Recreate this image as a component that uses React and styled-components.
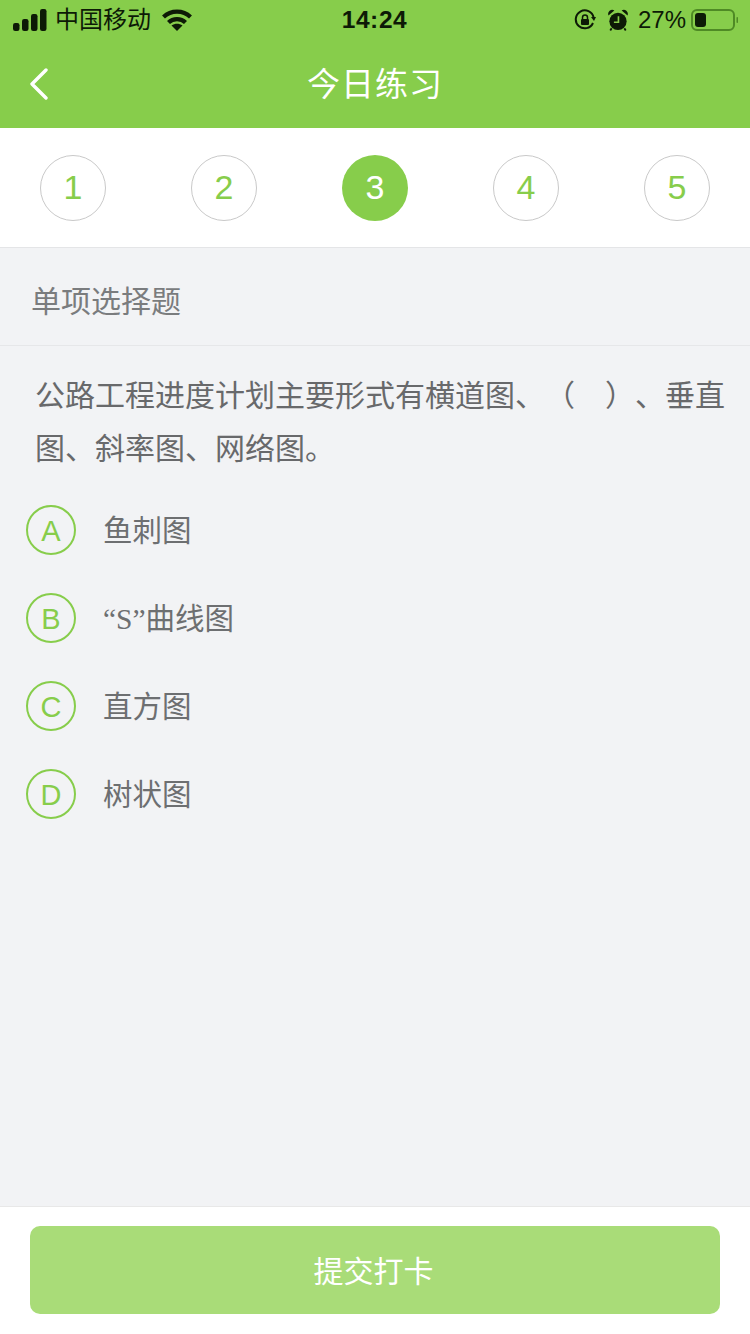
import React from "react";
import styled, {createGlobalStyle} from "styled-components";

const sans = `"Liberation Sans", "Noto Sans CJK SC", sans-serif`;

const GlobalStyle = createGlobalStyle`
    html, body {
        margin: 0;
        padding: 0;
    }
    body {
        font-family: ${sans};
        background: #f2f3f5;
    }
`;

const StyledPage = styled.div`
    width: 750px;
    height: 1334px;
    display: flex;
    flex-direction: column;
    overflow: hidden;
    background: #f2f3f5;
`;
const StyledHeader = styled.header`
    height: 128px;
    background: #87cd4b;
    display: flex;
    flex-direction: column;
    flex-shrink: 0;
`;
const StyledStatusBar = styled.div`
    height: 40px;
    padding: 0 12px 0 13px;
    display: flex;
    align-items: center;
    justify-content: space-between;
    color: #0d1a06;
`;
const StyledStatusSide = styled.div`
    flex: 1;
    display: flex;
    align-items: center;
    justify-content: ${(props) => props.$end ? "flex-end" : "flex-start"};
`;
const StyledCarrier = styled.span`
    font-size: 24px;
    line-height: 40px;
    margin: 0 11px 0 8px;
`;
const StyledClock = styled.span`
    font-size: 24.5px;
    font-weight: 700;
    letter-spacing: 0.6px;
    margin-right: 2px;
`;
const StyledLockGap = styled.span`
    width: 12px;
`;
const StyledPercent = styled.span`
    font-size: 24px;
    margin: 0 5px 0 10px;
`;
const StyledNavBar = styled.div`
    flex: 1;
    position: relative;
    display: flex;
    align-items: center;
    justify-content: center;
`;
const StyledBack = styled.svg`
    position: absolute;
    left: 29px;
    top: 28px;
`;
const StyledTitle = styled.h1`
    margin: 0;
    font-size: 33px;
    font-weight: 400;
    color: #fff;
    letter-spacing: 1px;
    position: relative;
    top: -2px;
`;
const StyledSteps = styled.div`
    height: 120px;
    flex-shrink: 0;
    box-sizing: border-box;
    background: #fff;
    border-bottom: 1px solid #e4e5e7;
    padding: 0 40px;
    display: flex;
    align-items: center;
    justify-content: space-between;
`;
const StyledStep = styled.div`
    width: 66px;
    height: 66px;
    box-sizing: border-box;
    border-radius: 50%;
    display: flex;
    align-items: center;
    justify-content: center;
    font-size: 34px;
    border: ${(props) => props.$active ? "none" : "1px solid #c9c9c9"};
    background: ${(props) => props.$active ? "#87cd4b" : "#fff"};
    color: ${(props) => props.$active ? "#fff" : "#87cd4b"};
`;
const StyledQuestionType = styled.div`
    height: 98px;
    flex-shrink: 0;
    box-sizing: border-box;
    padding: 4px 31px 0;
    border-bottom: 1px solid #e6e7e9;
    display: flex;
    align-items: center;
    font-size: 30px;
    color: #7a7c7e;
`;
const StyledQuestion = styled.p`
    margin: 0;
    padding: 23px 20px 0 35px;
    font-size: 30px;
    line-height: 53px;
    color: #68696b;
    text-spacing-trim: space-all;
`;
const StyledOptions = styled.div`
    flex: 1;
    padding: 30px 26px 0;
    display: flex;
    flex-direction: column;
    gap: 38px;
`;
const StyledOption = styled.div`
    display: flex;
    align-items: center;
    gap: 27px;
`;
const StyledOptionKey = styled.div`
    width: 50px;
    height: 50px;
    box-sizing: border-box;
    padding-top: 2px;
    border-radius: 50%;
    border: 2px solid #87cd4b;
    display: flex;
    align-items: center;
    justify-content: center;
    font-size: 29px;
    color: #87cd4b;
`;
const StyledOptionText = styled.span`
    font-family: "Liberation Serif", "Noto Sans CJK SC", serif;
    font-size: 29.5px;
    color: #6d6f71;
    position: relative;
    top: -2px;
`;
const StyledFooter = styled.footer`
    height: 128px;
    flex-shrink: 0;
    box-sizing: border-box;
    background: #fff;
    border-top: 1px solid #e8e8e8;
    padding: 19px 30px 0;
`;
const StyledSubmit = styled.button`
    width: 690px;
    height: 88px;
    border: 0;
    border-radius: 10px;
    padding: 0 3px 3px 0;
    background: #a9dc78;
    color: #fff;
    font-family: ${sans};
    font-size: 30px;
`;

const steps = [1, 2, 3, 4, 5];
const options = [
    {key: "A", text: "鱼刺图"},
    {key: "B", text: "“S”曲线图"},
    {key: "C", text: "直方图"},
    {key: "D", text: "树状图"}
];

function SignalIcon() {
    return (
        <svg width="34" height="22" viewBox="0 0 34 22">
            <rect x="0" y="14" width="6.5" height="8" rx="2.2" fill="currentColor"/>
            <rect x="9" y="10" width="6.5" height="12" rx="2.2" fill="currentColor"/>
            <rect x="18" y="5" width="6.5" height="17" rx="2.2" fill="currentColor"/>
            <rect x="27" y="0" width="6.5" height="22" rx="2.2" fill="currentColor"/>
        </svg>
    );
}

function WifiIcon() {
    return (
        <svg width="30" height="22" viewBox="0 0 30 22" fill="none" stroke="currentColor" strokeWidth="4.2">
            <path d="M1.5 8 C9 0.8 21 0.8 28.5 8"/>
            <path d="M6.5 13.5 C11 9 19 9 23.5 13.5"/>
            <path d="M9.5 16.5 L15 22 L20.5 16.5 C17 14 13 14 9.5 16.5 Z" fill="currentColor" stroke="none"/>
        </svg>
    );
}

function RotationLockIcon() {
    return (
        <svg width="22" height="22" viewBox="0 0 22 22" fill="none" stroke="currentColor" strokeWidth="2">
            <path d="M19 14 A9 9 0 1 1 19.6 8.5"/>
            <path d="M17 8 L22 8 L20 12 Z" fill="currentColor" stroke="none"/>
            <rect x="7" y="10" width="8" height="6" rx="1" fill="currentColor" stroke="none"/>
            <path d="M8.5 10 V8.5 A2.5 2.5 0 0 1 13.5 8.5 V10" strokeWidth="1.5"/>
        </svg>
    );
}

function AlarmIcon() {
    return (
        <svg width="20" height="22" viewBox="0 0 22 24">
            <circle cx="11" cy="13.5" r="9.5" fill="currentColor"/>
            <path d="M0.5 7 A4.5 4.5 0 0 1 7 1.5 Z M21.5 7 A4.5 4.5 0 0 0 15 1.5 Z" fill="currentColor"/>
            <path d="M4 21 L2.5 23.5 M18 21 L19.5 23.5" stroke="currentColor" strokeWidth="2"/>
            <path d="M11.5 8 V14.5 H6.5" fill="none" stroke="#87cd4b" strokeWidth="1.8"/>
        </svg>
    );
}

function BatteryIcon() {
    return (
        <svg width="47" height="24" viewBox="0 0 47 24">
            <rect x="1" y="2" width="42" height="20" rx="5" fill="none" stroke="#4f8a25" strokeWidth="2"/>
            <rect x="4" y="5" width="11" height="14" rx="3" fill="currentColor"/>
            <rect x="45.5" y="9" width="1.5" height="6" rx="0.7" fill="#4f8a25"/>
        </svg>
    );
}

function StatusBar() {
    return (
        <StyledStatusBar>
            <StyledStatusSide>
                <SignalIcon/>
                <StyledCarrier>中国移动</StyledCarrier>
                <WifiIcon/>
            </StyledStatusSide>
            <StyledClock>14:24</StyledClock>
            <StyledStatusSide $end>
                <RotationLockIcon/>
                <StyledLockGap/>
                <AlarmIcon/>
                <StyledPercent>27%</StyledPercent>
                <BatteryIcon/>
            </StyledStatusSide>
        </StyledStatusBar>
    );
}

export default function App() {
    return (
        <StyledPage>
            <GlobalStyle/>
            <StyledHeader>
                <StatusBar/>
                <StyledNavBar>
                    <StyledBack width="20" height="32" viewBox="0 0 20 32" fill="none" stroke="#fff" strokeWidth="3.4" strokeLinecap="round" strokeLinejoin="round">
                        <path d="M17 2 L3 16 L17 30"/>
                    </StyledBack>
                    <StyledTitle>今日练习</StyledTitle>
                </StyledNavBar>
            </StyledHeader>
            <StyledSteps>
                {steps.map((step) => (
                    <StyledStep key={step} $active={step === 3}>{step}</StyledStep>
                ))}
            </StyledSteps>
            <StyledQuestionType>单项选择题</StyledQuestionType>
            <StyledQuestion>公路工程进度计划主要形式有横道图、（　）、垂直图、斜率图、网络图。</StyledQuestion>
            <StyledOptions>
                {options.map((option) => (
                    <StyledOption key={option.key}>
                        <StyledOptionKey>{option.key}</StyledOptionKey>
                        <StyledOptionText>{option.text}</StyledOptionText>
                    </StyledOption>
                ))}
            </StyledOptions>
            <StyledFooter>
                <StyledSubmit>提交打卡</StyledSubmit>
            </StyledFooter>
        </StyledPage>
    );
}
